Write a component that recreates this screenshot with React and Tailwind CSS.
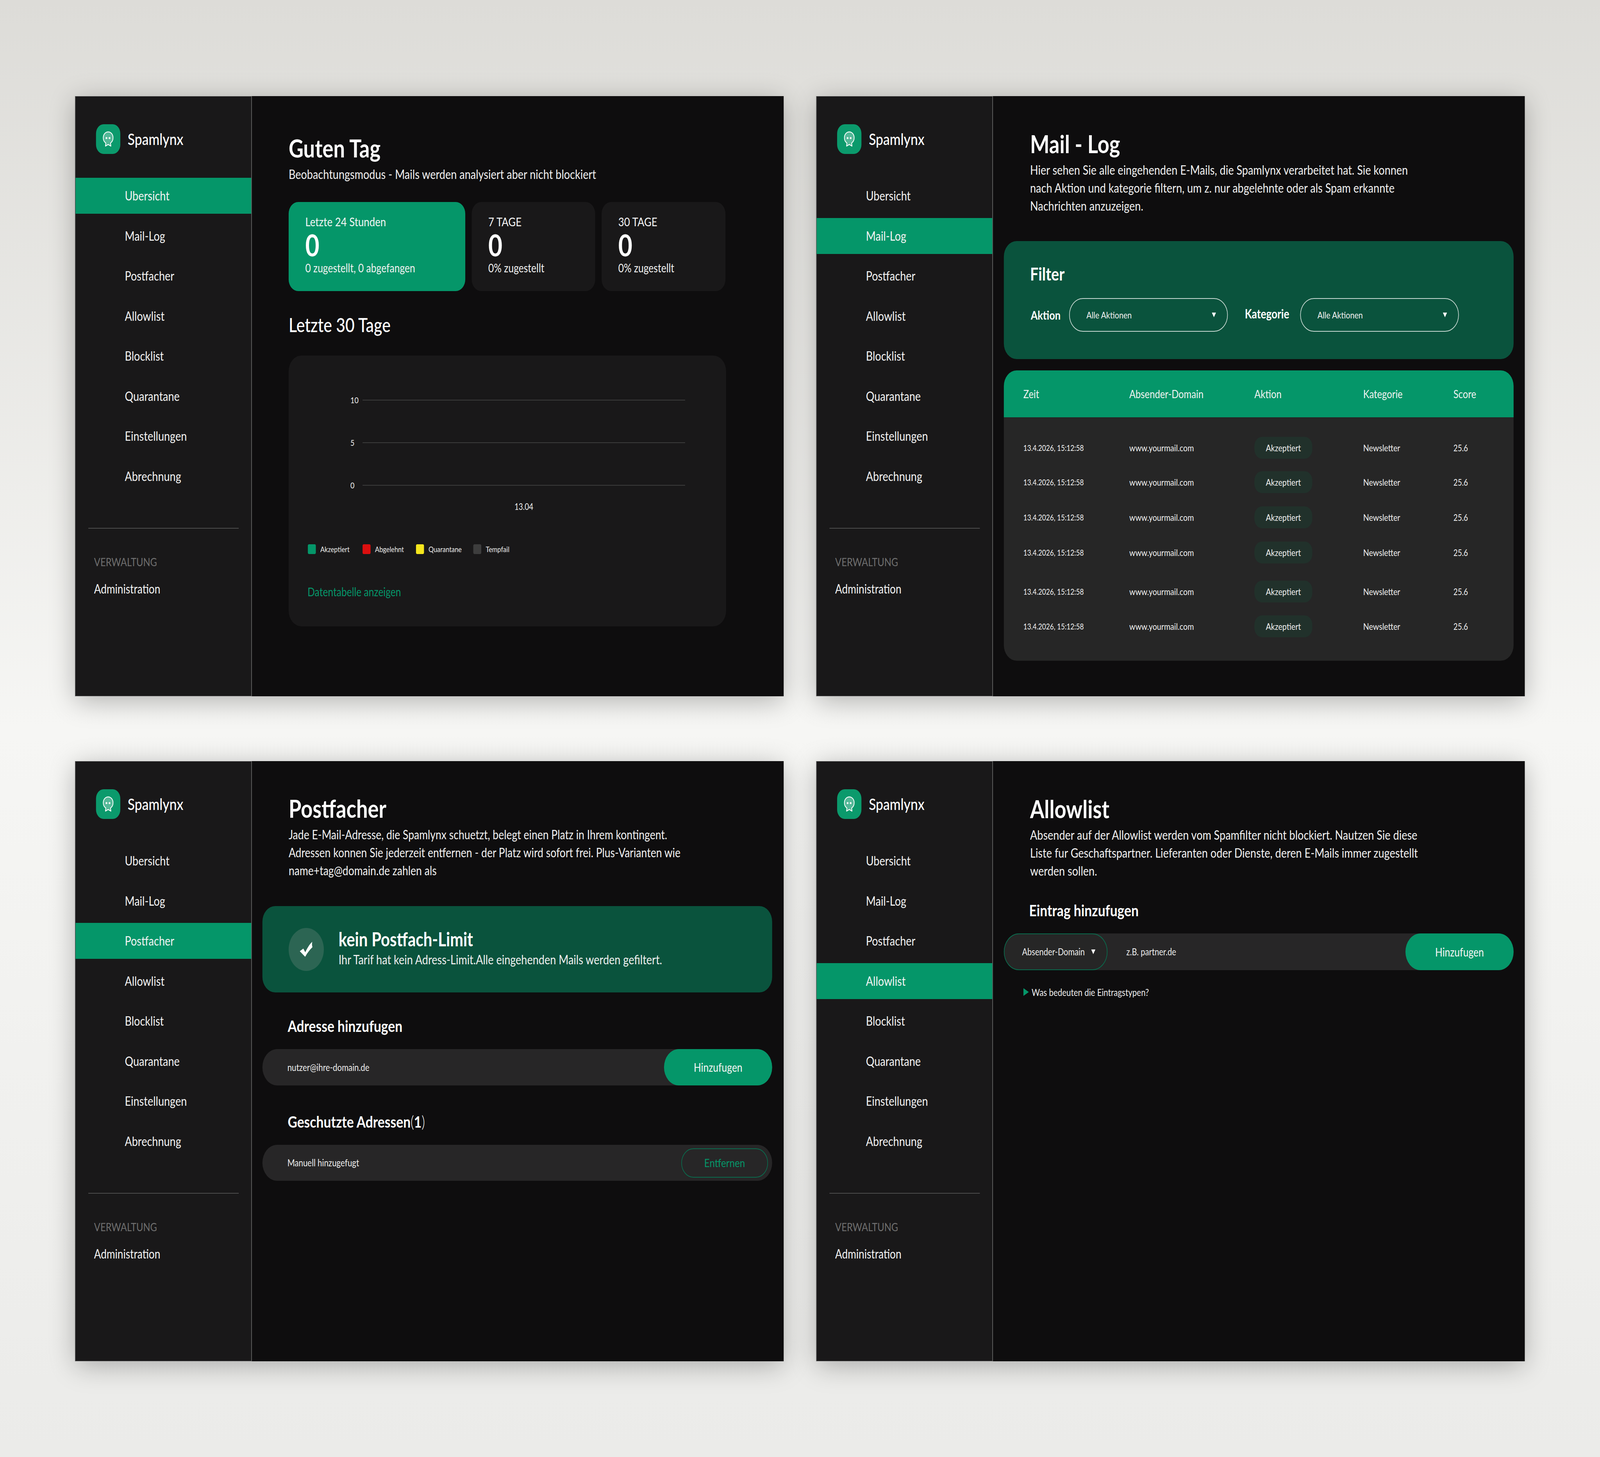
import React from 'react';

const NAV = ['Ubersicht', 'Mail-Log', 'Postfacher', 'Allowlist', 'Blocklist', 'Quarantane', 'Einstellungen', 'Abrechnung'];

const ROWS = ['mt-[50px]', 'mt-[32px]', 'mt-[34px]', 'mt-[34px]', 'mt-[44px]', 'mt-[33px]'];

const LEGEND = [
    { label: 'Akzeptiert', swatch: 'bg-[#059669]', width: 'w-[171px]' },
    { label: 'Abgelehnt', swatch: 'bg-[#dc0f0f]', width: 'w-[167px]' },
    { label: 'Quarantane', swatch: 'bg-[#f5e61d]', width: 'w-[179px]' },
    { label: 'Tempfail', swatch: 'bg-[#3d3d3d]', width: 'w-[120px]' },
];

// the design is measured at 5000px, the window can be narrower than it was asked to be
const DESIGN_WIDTH = 5000;

const LogoMark = () => (
    <svg width="34" height="40" viewBox="0 0 32 38" fill="none">
        <path
            d="M16 1.5C7.5 1.5 1.5 8 1.5 16C1.5 21.5 4.5 26 9 28.5L8 36L16 32L24 36L23 28.5C27.5 26 30.5 21.5 30.5 16C30.5 8 24.5 1.5 16 1.5Z"
            fill="#ffffff"
            fillOpacity="0.3"
            stroke="#ffffff"
            strokeWidth="2.2"
            strokeLinejoin="round"
        />
        <circle cx="11" cy="16.5" r="2.6" fill="#ffffff" />
        <circle cx="20" cy="16.5" r="2.6" fill="#ffffff" />
    </svg>
);

const CheckMark = () => (
    <svg width="44" height="42" viewBox="170 238 130 125">
        <path d="M175 314L208 294L226 322C245 290 265 262 291 242C287 258 288 272 293 283C268 302 245 328 225 356Z" fill="#ffffff" />
    </svg>
);

const Caret = () => (
    <svg width="13" height="12" viewBox="0 0 13 12" className="shrink-0">
        <path d="M0 0H13L6.5 12Z" fill="#ffffff" />
    </svg>
);

const Sidebar = ({ active }) => (
    <aside className="w-[552px] shrink-0 flex flex-col bg-[#191819] border border-r-2 border-[#686868]">
        <div className="flex items-center gap-[23px] pt-[71px] pl-[64px]">
            <div className="w-[76px] h-[76px] rounded-[24px] bg-[#0b9a6c] flex items-center justify-center">
                <LogoMark />
            </div>
            <span className="text-[41px] leading-[76px] font-medium text-white">Spamlynx</span>
        </div>

        <nav className="mt-[61px] flex flex-col gap-[10.5px]">
            {NAV.map((item) => (
                <div
                    key={item}
                    className={`h-[92px] flex items-center pl-[154px] text-[33px] text-[#f4f4f4] ${item === active ? 'bg-[#059669]' : ''}`}
                >
                    {item}
                </div>
            ))}
        </nav>

        <div className="mt-[86px] ml-[40px] w-[470px] h-[2px] bg-[#4d4d4d]" />
        <div className="mt-[67px] ml-[58px] text-[29px] leading-[36px] text-[#6f6f6f]">VERWALTUNG</div>
        <div className="mt-[31px] ml-[58px] text-[32px] leading-[40px] text-[#f4f4f4]">Administration</div>
    </aside>
);

const Frame = ({ active, children, className }) => (
    <div className="w-[2214px] h-[1536px] flex bg-[#0e0d0e] shadow-[0_12px_70px_rgba(0,0,0,0.28)]">
        <Sidebar active={active} />
        <main className={`flex-1 flex flex-col min-w-0 ${className}`}>{children}</main>
    </div>
);

const Title = ({ children, className }) => (
    <h1 className={`text-[64px] leading-[62px] font-bold text-white ${className}`}>{children}</h1>
);

const Desc = ({ children, className }) => (
    <p className={`leading-[46px] text-[#f2f2f2] whitespace-nowrap ${className}`}>{children}</p>
);

const StatCard = ({ label, sub, green }) => (
    <div className={`h-[228px] rounded-[30px] pt-[34px] pl-[52px] ${green ? 'bg-[#059669]' : 'bg-[#191819]'}`}>
        <div className="text-[31.5px] leading-[32px] text-[#f6f6f6]">{label}</div>
        <div className="mt-[9px] text-[76px] leading-[70px] font-bold text-white">0</div>
        <div className="mt-[7px] text-[30px] leading-[32px] text-[#f2f2f2]">{sub}</div>
    </div>
);

const ChartRow = ({ label }) => (
    <div className="h-[2px] flex items-center pl-[193px]">
        <span className="w-[38px] text-[22px] leading-[30px] text-[#eeeeee]">{label}</span>
        <div className="w-[1008px] h-[2px] bg-[#3c3c3c]" />
    </div>
);

const Overview = () => (
    <Frame active="Ubersicht" className="pl-[115px] pr-[180px]">
        <Title className="mt-[102px]">Guten Tag</Title>
        <Desc className="mt-[12px] text-[33px]">Beobachtungsmodus - Mails werden analysiert aber nicht blockiert</Desc>

        <div className="mt-[49px] grid grid-cols-[552px_386px_387px] gap-[20px]">
            <StatCard green label="Letzte 24 Stunden" sub="0 zugestellt, 0 abgefangen" />
            <StatCard label="7 TAGE" sub="0% zugestellt" />
            <StatCard label="30 TAGE" sub="0% zugestellt" />
        </div>

        <h2 className="mt-[56px] text-[50px] leading-[60px] font-medium text-white">Letzte 30 Tage</h2>

        <div className="mt-[49px] h-[693px] rounded-[40px] bg-[#191819] pt-[113px]">
            <div className="flex flex-col gap-[107px]">
                <ChartRow label="10" />
                <ChartRow label="5" />
                <ChartRow label="0" />
            </div>
            <div className="mt-[38px] ml-[231px] w-[1008px] text-center text-[23px] leading-[30px] text-[#eeeeee]">13.04</div>
            <div className="mt-[79px] pl-[60px] flex items-center">
                {LEGEND.map((item) => (
                    <div key={item.label} className={`flex items-center gap-[14px] ${item.width}`}>
                        <span className={`w-[25px] h-[25px] rounded-[4px] ${item.swatch}`} />
                        <span className="text-[20px] leading-[30px] text-[#eeeeee]">{item.label}</span>
                    </div>
                ))}
            </div>
            <div className="mt-[74px] pl-[59px] text-[30px] leading-[40px] text-[#059669]">Datentabelle anzeigen</div>
        </div>
    </Frame>
);

const FilterSelect = () => (
    <div className="w-[496px] h-[86px] rounded-full border-2 border-[#c9d9d3] flex items-center justify-between pl-[52px] pr-[35px]">
        <span className="text-[24px] text-[#f2f2f2]">Alle Aktionen</span>
        <Caret />
    </div>
);

const MailLog = () => (
    <Frame active="Mail-Log" className="pl-[34px] pr-[35px]">
        <Title className="mt-[91px] ml-[82px]">Mail - Log</Title>
        <Desc className="mt-[12px] ml-[82px] text-[33px]">
            Hier sehen Sie alle eingehenden E-Mails, die Spamlynx verarbeitet hat. Sie konnen
            <br />
            nach Aktion und kategorie filtern, um z. nur abgelehnte oder als Spam erkannte
            <br />
            Nachrichten anzuzeigen.
        </Desc>

        <section className="mt-[68px] h-[302px] rounded-[40px] bg-[#0a533d] pt-[59px] pl-[82px]">
            <h2 className="text-[46px] leading-[50px] font-bold text-white">Filter</h2>
            <div className="mt-[37px] flex items-center">
                <span className="w-[122px] pl-[2px] text-[31px] font-bold text-white">Aktion</span>
                <FilterSelect />
                <span className="ml-[53px] w-[173px] pb-[6px] text-[32px] font-bold text-white">Kategorie</span>
                <FilterSelect />
            </div>
        </section>

        <section className="mt-[29px]">
            <div className="h-[120px] rounded-t-[40px] bg-[#059669] pl-[61px] grid grid-cols-[331px_391px_340px_282px_1fr] items-center text-[29px] text-[#f4f4f4]">
                <span>Zeit</span>
                <span>Absender-Domain</span>
                <span>Aktion</span>
                <span>Kategorie</span>
                <span>Score</span>
            </div>
            <div className="h-[623px] rounded-b-[40px] bg-[#262626] pl-[61px] flex flex-col">
                {ROWS.map((margin, i) => (
                    <div key={i} className={`h-[56px] shrink-0 grid grid-cols-[331px_391px_340px_282px_1fr] items-center text-[#f0f0f0] ${margin}`}>
                        <span className="text-[21px]">13.4.2026, 15:12:58</span>
                        <span className="text-[24px]">www.yourmail.com</span>
                        <span className="w-[181px] h-[56px] rounded-[24px] bg-[#21312b] text-[24px] flex items-center justify-center">Akzeptiert</span>
                        <span className="text-[24px]">Newsletter</span>
                        <span className="text-[23px]">25.6</span>
                    </div>
                ))}
            </div>
        </section>
    </Frame>
);

const AddButton = () => (
    <button className="w-[338px] shrink-0 self-stretch rounded-full bg-[#059669] text-[30px] text-[#f6f6f6]">Hinzufugen</button>
);

const Mailboxes = () => (
    <Frame active="Postfacher" className="pl-[33px] pr-[36px]">
        <Title className="mt-[90px] ml-[82px]">Postfacher</Title>
        <Desc className="mt-[13px] ml-[82px] text-[32.4px]">
            Jade E-Mail-Adresse, die Spamlynx schuetzt, belegt einen Platz in Ihrem kontingent.
            <br />
            Adressen konnen Sie jederzeit entfernen - der Platz wird sofort frei. Plus-Varianten wie
            <br />
            name+tag@domain.de zahlen als
        </Desc>

        <section className="mt-[68px] h-[221px] rounded-[40px] bg-[#0a533d] pl-[82px] flex items-center gap-[46px]">
            <div className="w-[110px] h-[110px] rounded-full bg-[#2c6553] flex items-center justify-center">
                <CheckMark />
            </div>
            <div className="pb-[4px]">
                <h2 className="text-[49px] leading-[50px] font-bold text-white">kein Postfach-Limit</h2>
                <p className="mt-[5px] text-[33px] leading-[44px] text-[#f0f0f0]">Ihr Tarif hat kein Adress-Limit.Alle eingehenden Mails werden gefiltert.</p>
            </div>
        </section>

        <h3 className="mt-[61px] ml-[79px] text-[41px] leading-[50px] font-bold text-white">Adresse hinzufugen</h3>
        <div className="mt-[34px] h-[93px] rounded-full bg-[#272627] flex items-center justify-between pl-[78px]">
            <span className="text-[25px] text-[#eeeeee]">nutzer@ihre-domain.de</span>
            <AddButton />
        </div>

        <h3 className="mt-[68px] ml-[79px] text-[41px] leading-[50px] font-bold text-white">
            Geschutzte Adressen<span className="font-light">(</span>1<span className="font-light">)</span>
        </h3>
        <div className="mt-[34px] h-[92px] rounded-full bg-[#272627] flex items-center justify-between pl-[78px] pr-[13px]">
            <span className="text-[25px] text-[#eeeeee]">Manuell hinzugefugt</span>
            <button className="w-[271px] h-[75px] rounded-full border-2 border-[#0a6b4d] text-[29.5px] text-[#059669]">Entfernen</button>
        </div>
    </Frame>
);

const Allowlist = () => (
    <Frame active="Allowlist" className="pl-[34px] pr-[35px]">
        <Title className="mt-[91px] ml-[82px]">Allowlist</Title>
        <Desc className="mt-[12px] ml-[82px] text-[33px]">
            Absender auf der Allowlist werden vom Spamfilter nicht blockiert. Nautzen Sie diese
            <br />
            Liste fur Geschaftspartner. Lieferanten oder Dienste, deren E-Mails immer zugestellt
            <br />
            werden sollen.
        </Desc>

        <h3 className="mt-[54px] ml-[79px] text-[41px] leading-[50px] font-bold text-white">Eintrag hinzufugen</h3>
        <div className="mt-[34px] h-[94px] rounded-full bg-[#272627] flex items-center">
            <div className="w-[324px] self-stretch shrink-0 rounded-full border-2 border-[#0a6b4d] bg-[#262626] flex items-center justify-between pl-[55px] pr-[36px]">
                <span className="text-[24.5px] text-[#eeeeee]">Absender-Domain</span>
                <Caret />
            </div>
            <span className="ml-[59px] flex-1 text-[24.5px] text-[#eeeeee]">z.B. partner.de</span>
            <AddButton />
        </div>

        <div className="mt-[41px] ml-[61px] flex items-center gap-[9px]">
            <svg width="17" height="20" viewBox="0 0 17 20">
                <path d="M0 0L17 10L0 20Z" fill="#059669" />
            </svg>
            <span className="text-[25px] leading-[30px] text-[#eeeeee]">Was bedeuten die Eintragstypen?</span>
        </div>
    </Frame>
);

export default function App() {
    return (
        <div className="w-screen h-[3729px] overflow-hidden">
            <div
                className="w-[5000px] h-[3729px] origin-top-left pt-[246px] pl-[235px] font-['Lato',sans-serif] bg-linear-to-b from-[#dddcd8] via-[#f6f6f4] to-[#ebebe9]"
                style={{ transform: `scaleX(${window.innerWidth / DESIGN_WIDTH})` }}
            >
                <div className="grid grid-cols-[2214px_2214px] gap-x-[102px] gap-y-[166px]">
                    <Overview />
                    <MailLog />
                    <Mailboxes />
                    <Allowlist />
                </div>
            </div>
        </div>
    );
}
